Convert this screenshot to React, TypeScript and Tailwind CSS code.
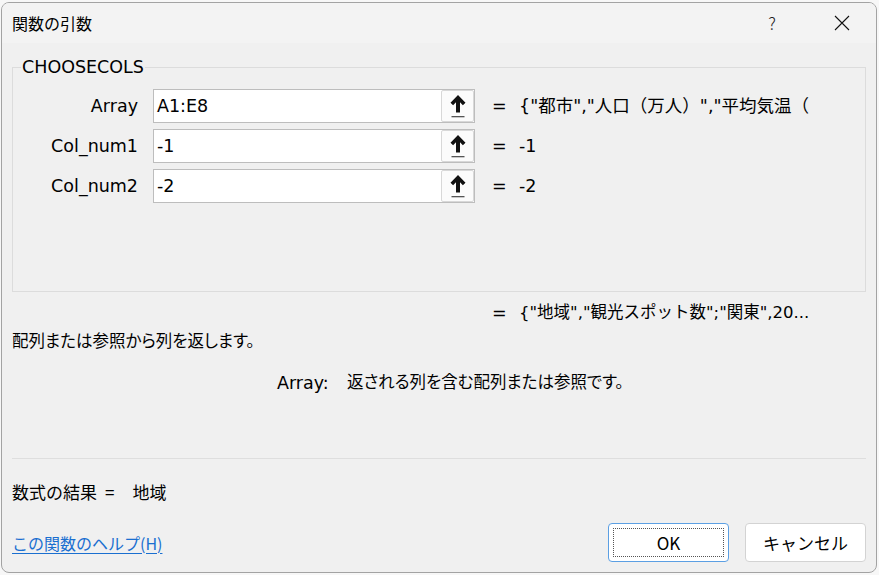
import React from 'react';

const body = { fontFamily: '"DejaVu Sans", "Noto Sans CJK JP", sans-serif' };
const ui = { fontFamily: '"Noto Sans CJK JP", "Noto Sans", sans-serif' };

function RefArrow() {
  return (
    <svg width="18" height="26" viewBox="0 0 18 26" aria-hidden="true">
      <path d="M9 2 L16.5 9.8 L13.9 12.2 L11 9.2 L11 19.5 L7 19.5 L7 9.2 L4.1 12.2 L1.5 9.8 Z" fill="#111" />
      <rect x="2.5" y="23" width="13" height="1.3" fill="#555" />
    </svg>
  );
}

function ArgRow({ label, value, result }: { label: string; value: string; result: string }) {
  return (
    <div className="flex items-center h-[34px]">
      <div className="w-[125px] text-right text-[17.5px] text-black">{label}</div>
      <div className="ml-[15px] w-[322px] h-[34px] flex items-stretch border border-[#bdbdbd] bg-white">
        <div className="flex-1 flex items-center pl-[3px] text-[17.5px] text-black">{value}</div>
        <button className="w-[33px] flex items-center justify-center border border-[#d8d8d8] rounded-[2px] bg-[#fbfbfb]">
          <RefArrow />
        </button>
      </div>
      <div className="ml-[17px] w-[27px] text-[17.5px] text-black">=</div>
      <div className="text-[17.5px] text-black whitespace-nowrap">{result}</div>
    </div>
  );
}

export default function App() {
  return (
    <div className="w-[879px] h-[575px] bg-[#f7f7f7] pl-[1px] pt-[2px]" style={body}>
      <div className="w-[876px] h-[571px] rounded-[8px] border border-[#a3a3a3] bg-[#f0f0f0] flex flex-col overflow-hidden">
        <div className="h-[40px] shrink-0 bg-[#f3f3f3] flex items-center pl-[10px] pr-[11px]">
          <span className="text-[16px] text-black" style={ui}>関数の引数</span>
          <div className="ml-auto flex items-center gap-[24px]">
            <div className="w-[46px] h-[30px] flex items-center justify-center text-[17px] font-light text-[#222]" style={ui}>?</div>
            <div className="w-[46px] h-[30px] flex items-center justify-center">
              <svg width="16" height="16" viewBox="0 0 16 16" aria-hidden="true">
                <path d="M1 1 L15 15 M15 1 L1 15" stroke="#111" strokeWidth="1.1" />
              </svg>
            </div>
          </div>
        </div>

        <div className="flex-1 flex flex-col px-[10px]">
          <fieldset className="mt-[14px] h-[235px] border border-[#dcdcdc]">
            <legend className="ml-[8px] px-[1px] leading-[20px] text-[17.5px] text-black">CHOOSECOLS</legend>
            <div className="mt-[12px] flex flex-col gap-[6px]">
              <ArgRow label="Array" value="A1:E8" result={'{"都市","人口（万人）","平均気温（'} />
              <ArgRow label="Col_num1" value="-1" result="-1" />
              <ArgRow label="Col_num2" value="-2" result="-2" />
            </div>
          </fieldset>

          <div className="mt-[10px] pl-[480px] flex items-center h-[22px] text-[16.5px] text-black whitespace-nowrap">
            <span className="w-[27px] text-[17.5px]">=</span>
            <span>{'{"地域","観光スポット数";"関東",20...'}</span>
          </div>

          <div className="mt-[7px] h-[22px] flex items-center text-[16.5px] text-black [font-feature-settings:'palt']">
            配列または参照から列を返します。
          </div>

          <div className="mt-[19px] pl-[265px] h-[22px] flex items-center text-[16.5px] text-black">
            <span className="w-[70px] text-[17.5px]">Array:</span>
            <span className="[font-feature-settings:'palt']">返される列を含む配列または参照です。</span>
          </div>

          <div className="mt-[64px] h-px bg-[#dedede]" />

          <div className="mt-[22px] h-[22px] flex items-center text-[17px] text-black" style={ui}>
            <span>数式の結果</span>
            <span className="ml-[8px]">=</span>
            <span className="ml-[18px]">地域</span>
          </div>

          <div className="mt-[20px] flex items-center">
            <a href="#" className="text-[16px] text-[#1a6fd0] underline underline-offset-[3px]" style={ui}>
              この関数のヘルプ(H)
            </a>
            <div className="ml-auto flex gap-[16px]">
              <button className="w-[121px] h-[39px] rounded-[4px] border border-[#5b9fe3] bg-white p-[4px]" style={ui}>
                <div className="w-full h-full border border-dotted border-[#555] flex items-center justify-center text-[17px] text-black">
                  OK
                </div>
              </button>
              <button className="w-[121px] h-[39px] rounded-[4px] border border-[#d3d3d3] bg-white flex items-center justify-center text-[17px] text-black" style={ui}>
                キャンセル
              </button>
            </div>
          </div>
        </div>
      </div>
    </div>
  );
}
